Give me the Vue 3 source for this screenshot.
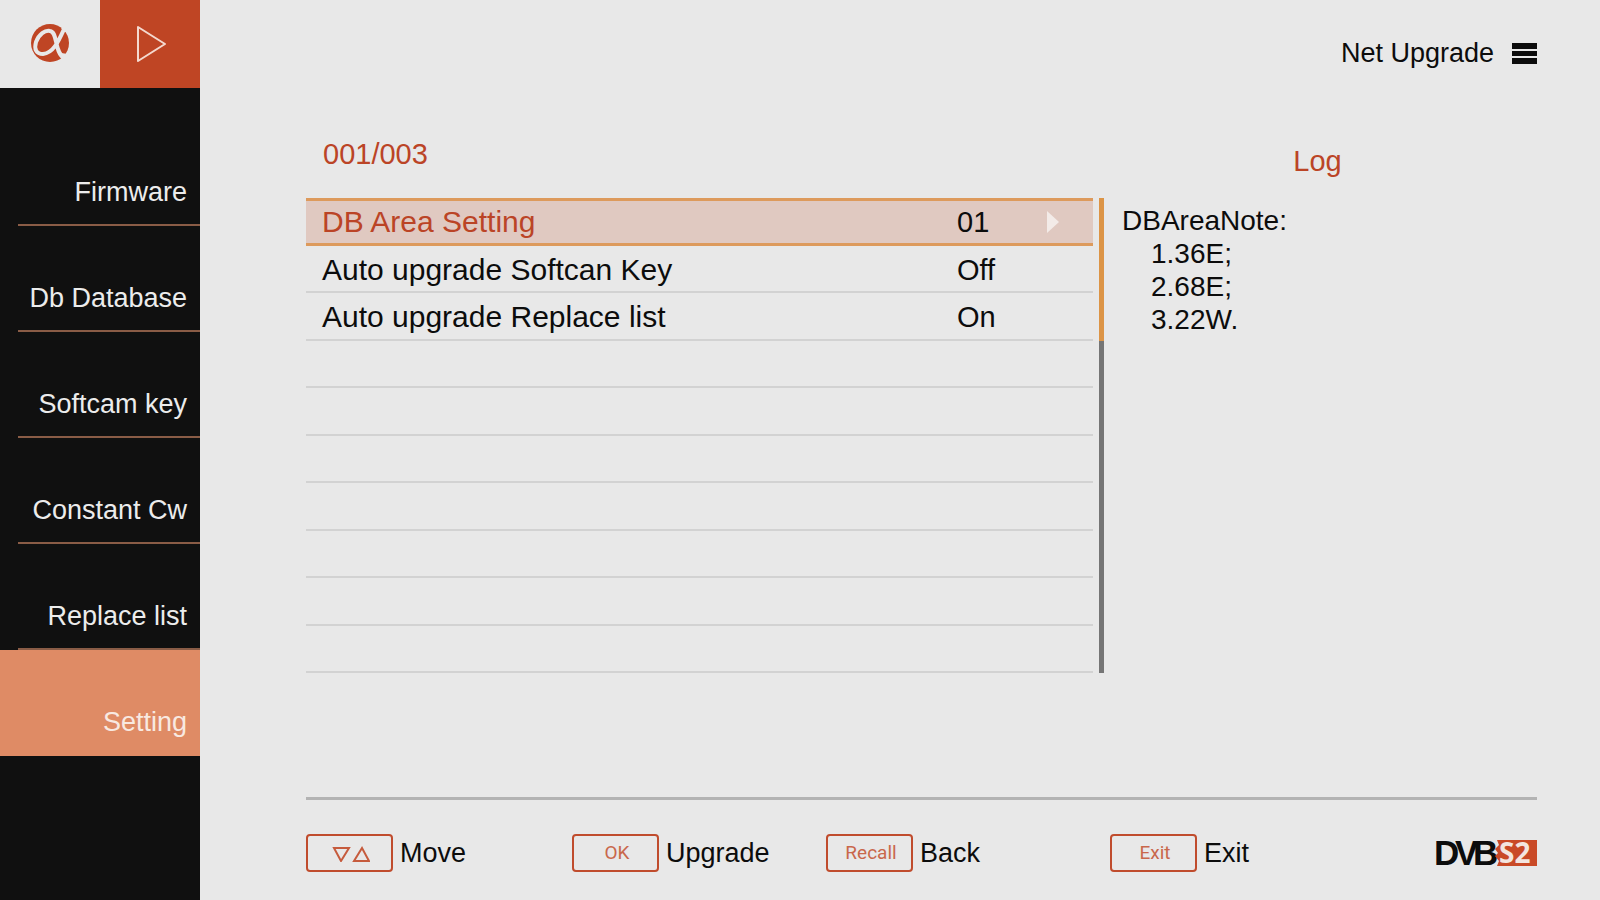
<script setup>
import { ref } from 'vue'

const sections = ['Firmware', 'Db Database', 'Softcam key', 'Constant Cw', 'Replace list', 'Setting']
const active = ref('Setting')

const options = [
  { label: 'DB Area Setting', value: '01' },
  { label: 'Auto upgrade Softcan Key', value: 'Off' },
  { label: 'Auto upgrade Replace list', value: 'On' },
]
const selected = ref(0)
const visibleRows = 10
const notes = ['1.36E;', '2.68E;', '3.22W.']
const keys = [
  { cap: '', label: 'Move' },
  { cap: 'OK', label: 'Upgrade' },
  { cap: 'Recall', label: 'Back' },
  { cap: 'Exit', label: 'Exit' },
]
const pad = (n) => String(n).padStart(3, '0')
</script>

<template>
  <div class="screen">
    <aside class="sidebar">
      <div class="tabs">
        <button class="tab brand" type="button" aria-label="Home">
          <svg width="40" height="40" viewBox="0 0 40 40" aria-hidden="true">
            <circle cx="20" cy="19" r="19" fill="#bf4524" />
            <path d="M35 3C29 16 24 29 13 30C6 30 4 25 6 18C9 10 15 6 20 7C28 8 24 28 34 34" fill="none" stroke="#e8e8e8" stroke-width="4" />
            <path d="M31 4L36 1L38 8L34 8ZM31 29L38 30L34 37Z" fill="#e8e8e8" />
          </svg>
        </button>
        <button class="tab media" type="button" aria-label="Media">
          <svg width="32" height="38" viewBox="0 0 32 38" aria-hidden="true">
            <path d="M2 2L29 19L2 36Z" fill="none" stroke="#f4d9cf" stroke-width="2" stroke-linejoin="round" />
          </svg>
        </button>
      </div>
      <nav class="menu">
        <button
          v-for="name in sections"
          :key="name"
          type="button"
          class="menu-item"
          :class="{ active: name === active }"
          @click="active = name"
        >{{ name }}</button>
      </nav>
    </aside>

    <main class="main">
      <header class="topbar">
        <h1 class="title">Net Upgrade</h1>
        <button class="burger" type="button" aria-label="Menu">
          <svg width="25" height="21" viewBox="0 0 25 21" aria-hidden="true">
            <path d="M0 0H25V6H0ZM0 8H25V13H0ZM0 15H25V21H0Z" fill="#0c0c0c" />
          </svg>
        </button>
      </header>

      <div class="content">
        <div class="count">{{ pad(selected + 1) }}/{{ pad(options.length) }}</div>
        <h2 class="log-title">Log</h2>

        <div class="list">
          <table class="options">
            <tbody>
              <tr
                v-for="(option, i) in options"
                :key="option.label"
                :class="{ selected: i === selected }"
                @click="selected = i"
              >
                <th scope="row">{{ option.label }}</th>
                <td class="value">{{ option.value }}</td>
                <td class="step">
                  <button v-if="i === selected" type="button" class="next" aria-label="Next value">
                    <svg width="12" height="22" viewBox="0 0 12 22" aria-hidden="true">
                      <path d="M0 0L12 11L0 22Z" fill="#f3ebe8" />
                    </svg>
                  </button>
                </td>
              </tr>
              <tr v-for="n in visibleRows - options.length" :key="n">
                <td></td><td></td><td></td>
              </tr>
            </tbody>
          </table>
          <div class="track">
            <div class="thumb" :style="{ height: (options.length / visibleRows) * 100 + '%' }"></div>
          </div>
        </div>

        <section class="notes">
          <p>DBAreaNote:</p>
          <p v-for="note in notes" :key="note" class="entry">{{ note }}</p>
        </section>
      </div>

      <footer class="footer">
        <button v-for="k in keys" :key="k.label" type="button" class="action">
          <span class="cap">
            <svg v-if="!k.cap" width="38" height="18" viewBox="0 0 38 18" aria-hidden="true">
              <path d="M2 4H17L9 17ZM22 17H37L30 4Z" fill="none" stroke="#c65b3d" stroke-width="2" />
            </svg>
            <template v-else>{{ k.cap }}</template>
          </span>
          <span>{{ k.label }}</span>
        </button>
        <svg class="dvb" width="107" height="44" viewBox="-6 -9 107 44" role="img" aria-label="DVB S2">
          <text class="dvb-name" x="-2 19 37" y="25">DVB</text>
          <path d="M61 0H101V26H61L63 21L59 16L62 13L59 9L63 5Z" fill="#c94a27" />
          <text class="dvb-mode" x="63" y="23">S2</text>
        </svg>
      </footer>
    </main>
  </div>
</template>

<style>
body {
  background: #e8e8e8;
}
</style>

<style scoped>
.screen {
  display: flex;
  min-height: 100vh;
  background: #e8e8e8;
  color: #0c0c0c;
  font-family: "Liberation Sans", Arial, sans-serif;
  font-size: 27px;
  line-height: 32px;
}
button {
  margin: 0;
  padding: 0;
  border: 0;
  background: none;
  color: inherit;
  font: inherit;
  cursor: pointer;
}
svg {
  display: block;
}
.sidebar {
  flex: none;
  width: 200px;
  background: #101010;
}
.tabs {
  display: grid;
  grid-template-columns: 1fr 1fr;
  height: 88px;
  margin-bottom: 32px;
}
.tab {
  display: flex;
  align-items: center;
  justify-content: center;
}
.brand {
  background: #e8e8e8;
}
.media {
  background: #bf4524;
  padding-left: 4px;
}
.menu {
  display: flex;
  flex-direction: column;
}
.menu-item {
  display: flex;
  align-items: flex-end;
  justify-content: flex-end;
  height: 106px;
  padding: 0 13px 18px 0;
  color: #ececec;
  background: linear-gradient(#8a5c46, #8a5c46) right bottom / calc(100% - 18px) 2px no-repeat;
}
.menu-item.active {
  background: #df8b65;
  color: #f8e9e1;
}
.main {
  flex: 1;
  display: flex;
  flex-direction: column;
  padding: 37px 63px 25px 106px;
}
.topbar {
  display: flex;
  align-items: center;
  justify-content: flex-end;
  gap: 18px;
}
.title,
.log-title {
  margin: 0;
  font-weight: 400;
}
.title {
  font-size: 27px;
}
.content {
  display: grid;
  grid-template-columns: 798fr 415fr;
  grid-template-rows: 60px auto;
  column-gap: 18px;
  margin-top: 69px;
}
.count,
.log-title {
  font-size: 29px;
  color: #bb4426;
}
.count {
  padding-left: 17px;
}
.log-title {
  padding: 7px 24px 0 0;
  text-align: center;
}
.list {
  display: flex;
  gap: 6px;
}
.options {
  flex: 1;
  height: 475px;
  table-layout: fixed;
  border-collapse: separate;
  border-spacing: 0;
  font-size: 30px;
}
.options tr {
  height: 10%;
}
.options th,
.options td {
  padding: 3px 0 0;
  border-bottom: 2px solid #d2d2d2;
  font-weight: 400;
  text-align: left;
  vertical-align: middle;
}
.options th {
  padding-left: 16px;
}
.options .value {
  width: 90px;
  font-size: 29px;
}
.options .step {
  width: 46px;
}
.options .selected th,
.options .selected td {
  padding-top: 0;
  border-top: 3px solid #dd9a5c;
  border-bottom: 3px solid #dd9a5c;
  background: #e0c9c1;
}
.options .selected th {
  color: #bb4426;
}
.next {
  display: block;
}
.track {
  width: 5px;
  background: #757575;
}
.thumb {
  background: #dc9446;
}
.notes {
  padding-top: 6px;
  font-size: 28px;
  line-height: 33px;
}
.notes p {
  margin: 0;
}
.entry {
  padding-left: 29px;
}
.footer {
  display: grid;
  grid-template-columns: 266fr 254fr 284fr 320fr 107px;
  align-items: center;
  margin-top: auto;
  padding-top: 31px;
  border-top: 3px solid #b3b3b3;
}
.action {
  display: flex;
  align-items: center;
  gap: 7px;
}
.cap {
  display: flex;
  align-items: center;
  justify-content: center;
  box-sizing: border-box;
  width: 87px;
  height: 38px;
  padding-left: 3px;
  border: 2px solid #c04c2d;
  border-radius: 4px;
  color: #c9674b;
  font-family: Roboto, sans-serif;
  font-size: 19px;
}
.dvb-name {
  font: 700 35px "Liberation Sans", Arial, sans-serif;
  fill: #0c0c0c;
}
.dvb-mode {
  font: 700 28px "Noto Sans", sans-serif;
  fill: #f3e6e0;
}
</style>
